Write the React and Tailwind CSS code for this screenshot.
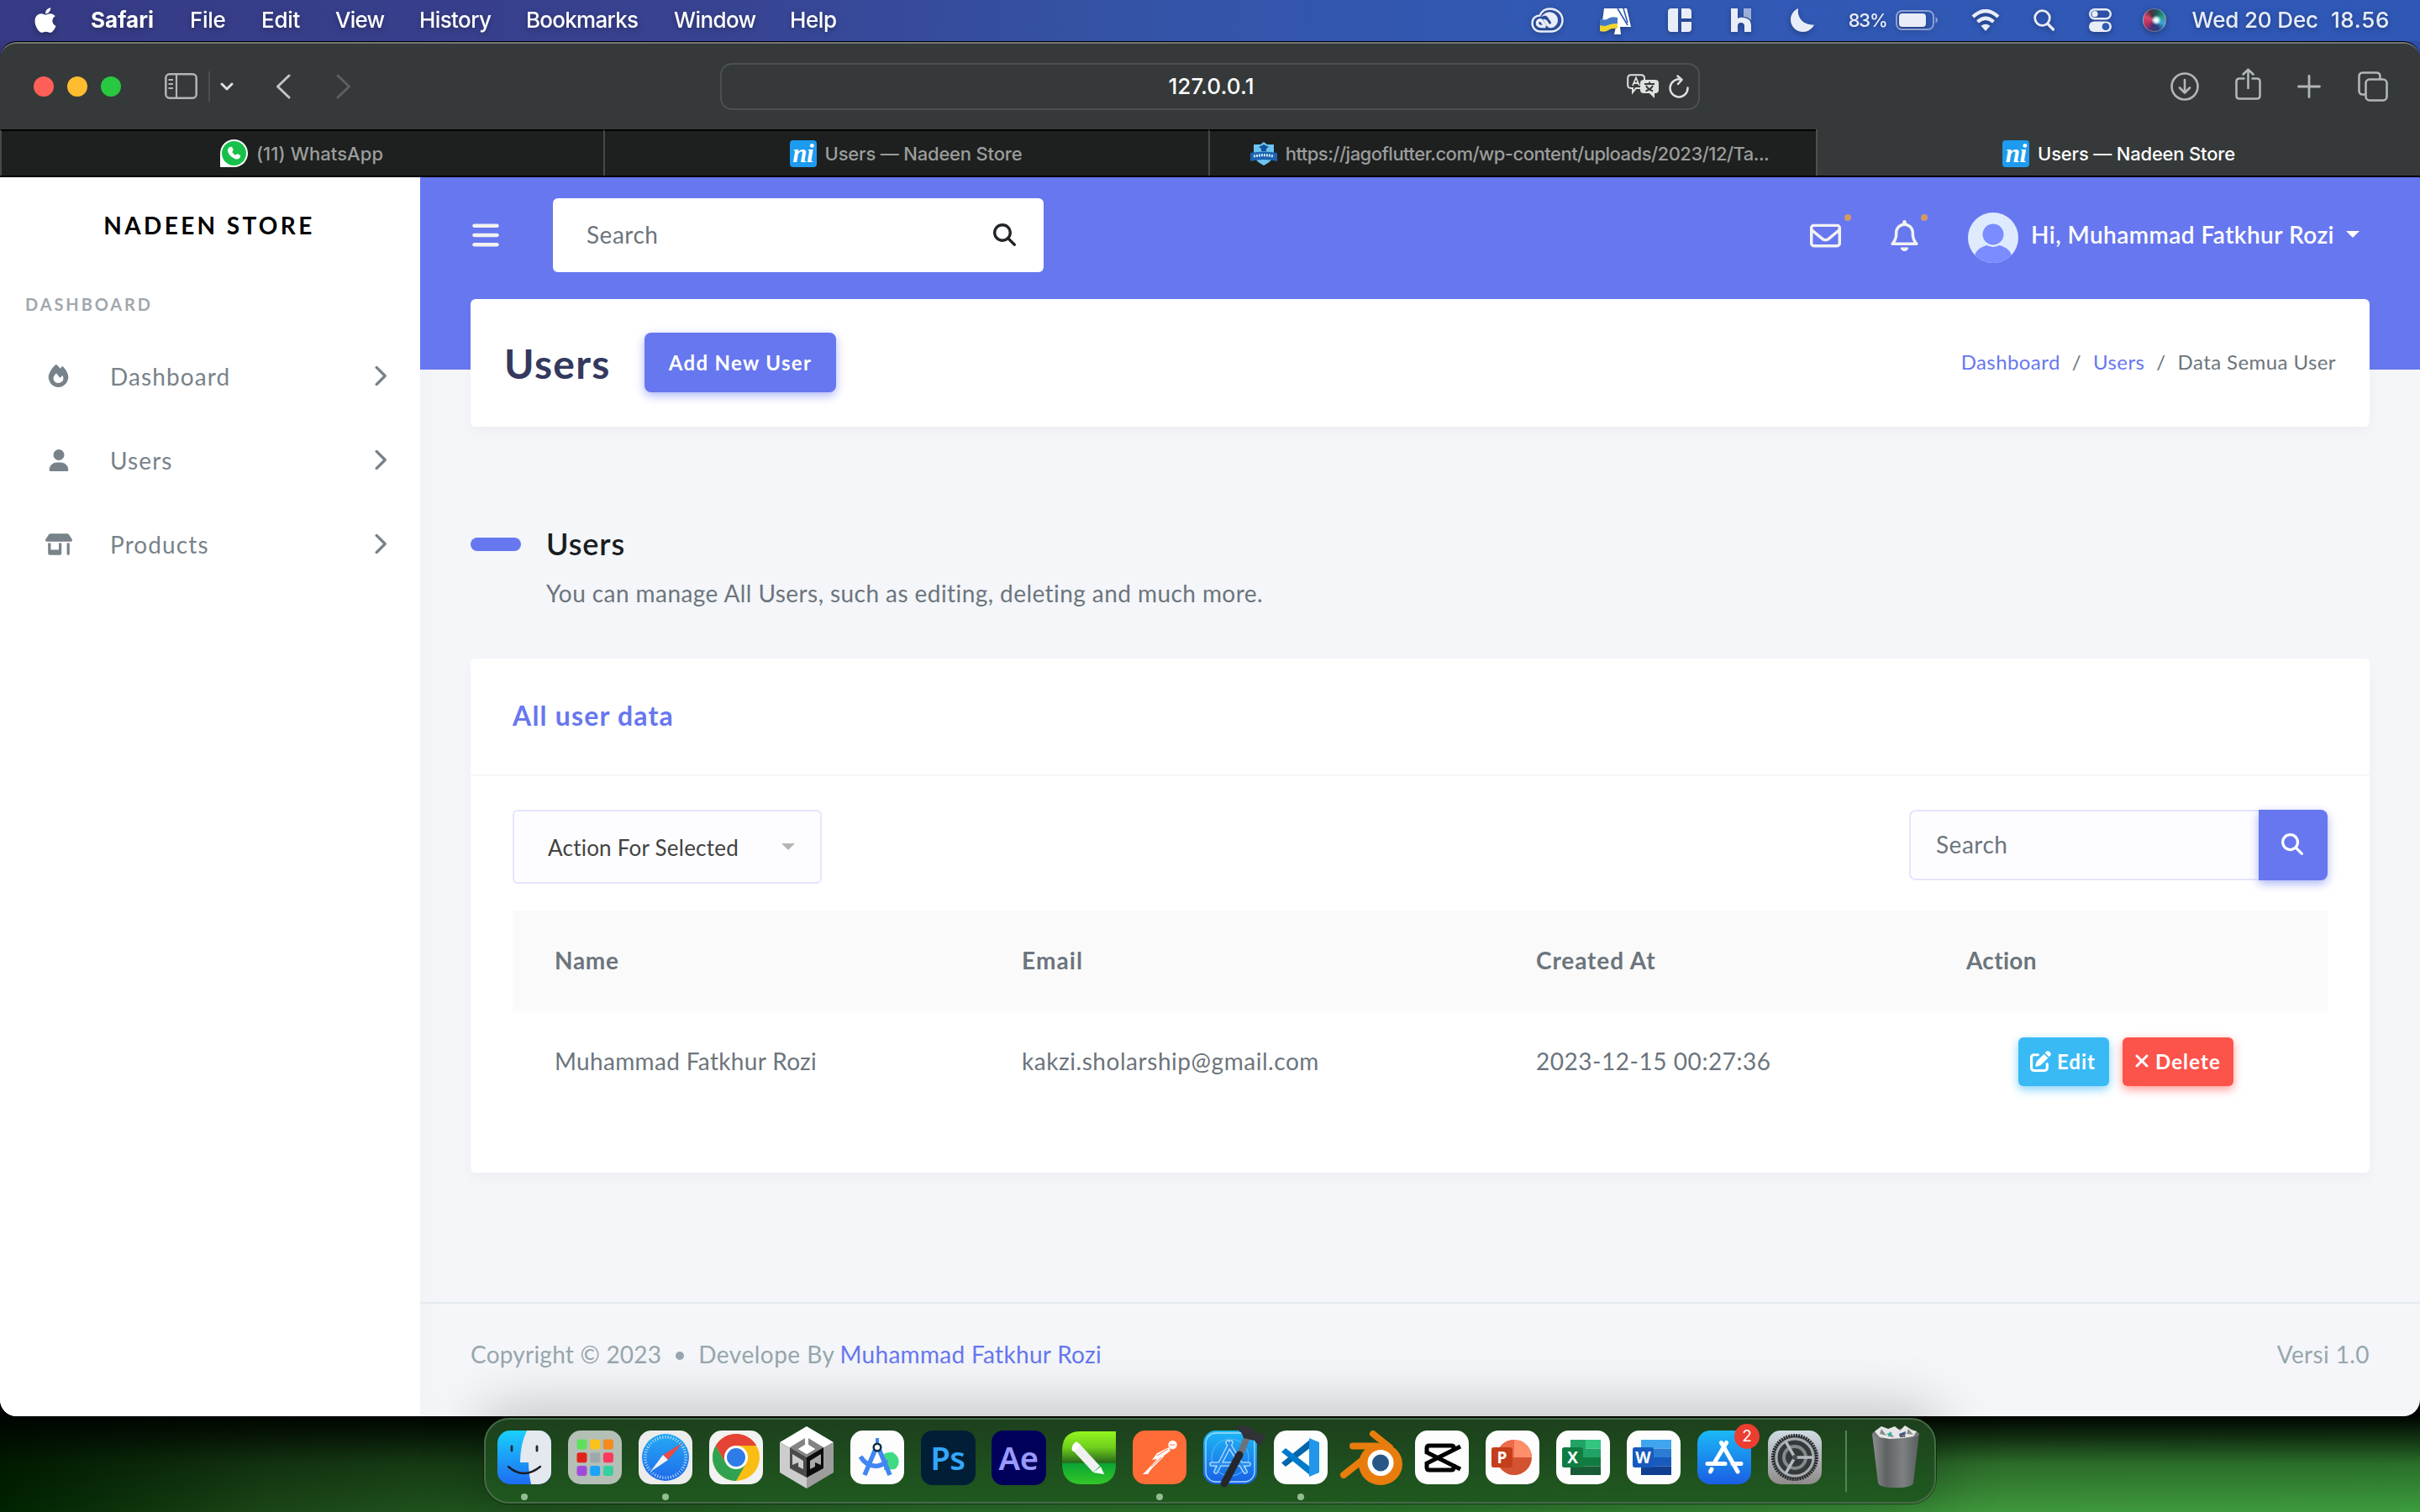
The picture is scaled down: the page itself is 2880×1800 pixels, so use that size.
import React from "react";
import { FaApple } from "react-icons/fa";
import {
  FaBars,
  FaChevronRight,
  FaFire,
  FaMagnifyingGlass,
  FaPenToSquare,
  FaRegBell,
  FaRegEnvelope,
  FaShop,
  FaUser,
  FaXmark,
} from "react-icons/fa6";

/* ---------- menu bar ---------- */

const MENUS = [
  { label: "Safari", cls: "w-[118px] font-bold tracking-[0.02px]" },
  { label: "File", cls: "w-[85px] font-medium tracking-[-0.3px]" },
  { label: "Edit", cls: "w-[88px] font-medium tracking-[-0.3px]" },
  { label: "View", cls: "w-[100px] font-medium tracking-[-0.8px]" },
  { label: "History", cls: "w-[127px] font-medium tracking-[-0.6px]" },
  { label: "Bookmarks", cls: "w-[176px] font-medium tracking-[-0.73px]" },
  { label: "Window", cls: "w-[138px] font-medium tracking-[-0.6px]" },
  { label: "Help", cls: "font-medium tracking-[-0.4px]" },
];

function MenuBar() {
  return (
    <div className="flex h-[49px] shrink-0 items-center bg-[linear-gradient(90deg,#363a84_0%,#384290_28%,#3454a8_48%,#3159b4_65%,#2f57b6_100%)] pb-[2px] font-['Inter',sans-serif] text-[26px] leading-[32px] text-white">
      <div className="flex w-full items-center drop-shadow-[0_2px_3px_rgba(0,0,0,0.3)]">
        <FaApple className="ml-[37px] mr-[37px] size-[34px] shrink-0" />
        {MENUS.map((m) => (
          <span key={m.label} className={`shrink-0 ${m.cls}`}>
            {m.label}
          </span>
        ))}
        <div className="ml-auto flex items-center pr-[36px] text-[#e9edf8]">
          <svg className="mr-[43px] h-[30px] w-[39px]" viewBox="0 0 39 30" fill="none" stroke="currentColor">
            <path d="M11.500 28.500C5.500 28.500 1.500 24 1.500 18.500C1.500 13 5.500 9.500 10.500 9.500C12.500 4.500 17 1.500 22.500 1.500C31 1.500 37.500 7.500 37.500 15C37.500 22.500 31.500 28.500 23.500 28.500Z" strokeWidth="2.400" />
            <path d="M17.500 22.500H12.500C8.500 22.500 7.500 20 7.500 18.500C7.500 16 9.500 14.500 12 15L17 22.500" strokeWidth="3.600" />
            <path d="M13 10.500C17 5 24 4.500 28.500 8C33 12 32.500 19 28 22.500C24 25 20.500 24 18.500 21L14.500 14.500C17 13.500 18.500 15 19.500 16.500L21 19C22.500 21 25 19.500 24 17L19.500 10.500C17.500 8.800 15 9 13 10.500Z" fill="currentColor" strokeWidth="0.800" />
          </svg>
          <svg className="mr-[44px] mt-[3px] h-[32px] w-[37px]" viewBox="0 0 37 32">
            <path d="M5 1H32L37 23H24L25 32H17L19 23H2Z" fill="#fff" />
            <path d="M21 1L33 21M28 1L33 18" stroke="#3058b5" strokeWidth="1.600" />
            <path d="M0 13Q6 16 10 13T21 12V20Q14 19 10 21T0 21Z" fill="#4677c4" />
            <path d="M0 21Q6 23 10 21T21 19V25Q14 24 10 27T0 28Z" fill="#f0d52c" />
          </svg>
          <svg className="mr-[47px] h-[28px] w-[28px]" viewBox="0 0 28 28" fill="currentColor">
            <path d="M4 0H12V28H4Q0 28 0 24V4Q0 0 4 0ZM16 0H24Q28 0 28 4V12H16ZM16 16H28V24Q28 28 24 28H16Z" />
          </svg>
          <svg className="mr-[47px] h-[28px] w-[24px]" viewBox="0 0 24 28" fill="currentColor">
            <path d="M0 0H8V12Q11 10 15 11Q24 12 24 20V28H16V20Q15 17 12 17Q8 17 8 21V28H0Z" />
            <path d="M15 0H24V14Q20 10 15 10Z" opacity="0.6" />
          </svg>
          <svg className="mr-[41px] h-[28px] w-[28px]" viewBox="0 0 28 28" fill="currentColor">
            <path d="M9 0C7.500 10 14 20 28 19.500C25 25 20.500 28 15 28C7 28 0 22 0 13.500C0 7.500 3.500 2.500 9 0Z" />
          </svg>
          <span className="mr-[10px] text-[22px] font-medium tracking-[-1.2px]">83%</span>
          <svg className="mr-[40px] h-[24px] w-[50px]" viewBox="0 0 50 24">
            <rect x="1" y="1" width="44" height="22" rx="6.500" fill="none" stroke="#e9edf8" strokeOpacity="0.5" strokeWidth="2" />
            <rect x="4" y="4" width="32" height="16" rx="4" fill="#e9edf8" />
            <path d="M47.500 8Q50 9.500 50 12T47.500 16Z" fill="#e9edf8" fillOpacity="0.5" />
          </svg>
          <svg className="mr-[40px] h-[26px] w-[34px]" viewBox="0 0 34 26" fill="none" stroke="currentColor" strokeWidth="4.200">
            <path d="M2 9Q17 -5 32 9" />
            <path d="M7.500 15Q17 6.500 26.500 15" />
            <path d="M17 26L11.500 19.800Q17 15.500 22.500 19.800Z" fill="currentColor" stroke="none" />
          </svg>
          <svg className="mr-[41px] h-[26px] w-[25px]" viewBox="0 0 25 26" fill="none" stroke="currentColor" strokeWidth="2.800" strokeLinecap="round">
            <circle cx="10.500" cy="10.500" r="8.800" />
            <path d="M17 17.500L23.500 24" strokeWidth="3.400" />
          </svg>
          <svg className="mr-[37px] h-[28px] w-[27px]" viewBox="0 0 27 28">
            <rect x="1.200" y="1.200" width="24.600" height="11" rx="5.500" fill="none" stroke="#e9edf8" strokeWidth="2.400" />
            <circle cx="7" cy="6.700" r="3.600" fill="#e9edf8" />
            <rect x="0" y="15.500" width="27" height="12.500" rx="6.200" fill="#e9edf8" />
            <circle cx="20" cy="21.700" r="4.400" fill="#3058b5" />
          </svg>
          <span className="mr-[31px] size-[28px] rounded-full border border-white/30 bg-[radial-gradient(circle_at_58%_50%,#ffffff_0%,#d8f4ff_12%,transparent_30%),conic-gradient(from_20deg,#1d5a5a,#2a9c86,#3fa6d6,#27407f,#4a2f7a,#b8305f,#d8486a,#4a3040,#1d5a5a)]" />
          <span className="mr-[15px] font-medium tracking-[-0.15px]">Wed 20 Dec</span>
          <span className="font-medium tracking-[0.7px]">18.56</span>
        </div>
      </div>
    </div>
  );
}

/* ---------- browser chrome ---------- */

function Toolbar() {
  return (
    <div className="grid h-[102px] grid-cols-[857px_1166px_857px] items-center pb-px">
      <div className="flex items-center pl-[40px] text-[#b3b6b6]">
        <span className="mr-[16px] size-[24px] rounded-full bg-[#ff5f57]" />
        <span className="mr-[16px] size-[24px] rounded-full bg-[#febc2e]" />
        <span className="mr-[52px] size-[24px] rounded-full bg-[#28c840]" />
        <svg className="mr-[13px] h-[31px] w-[39px]" viewBox="0 0 39 31" fill="none" stroke="currentColor" strokeWidth="2.500">
          <rect x="1.300" y="1.300" width="36.400" height="28.400" rx="4.500" />
          <path d="M14 1V30M4.500 8H10M4.500 13H10M4.500 18H10" strokeWidth="2.200" />
        </svg>
        <span className="mr-[12px] h-[36px] w-[2px] bg-[#4b4f50]" />
        <svg className="mr-[50px] h-[10px] w-[16px]" viewBox="0 0 16 10" fill="none" stroke="#dfe0e0" strokeWidth="3" strokeLinecap="round" strokeLinejoin="round">
          <path d="M2 2L8 8L14 2" />
        </svg>
        <svg className="mr-[54px] h-[30px] w-[18px]" viewBox="0 0 18 30" fill="none" stroke="#c3c5c5" strokeWidth="3" strokeLinecap="round" strokeLinejoin="round">
          <path d="M16 2L2.500 15L16 28" />
        </svg>
        <svg className="h-[30px] w-[18px]" viewBox="0 0 18 30" fill="none" stroke="#5c6061" strokeWidth="3" strokeLinecap="round" strokeLinejoin="round">
          <path d="M2 2L15.500 15L2 28" />
        </svg>
      </div>

      <div className="grid h-[56px] grid-cols-[1fr_auto_1fr] items-center rounded-[14px] border-2 border-[#4c5051]">
        <span />
        <span className="pl-[3px] font-['Inter',sans-serif] text-[26px] font-medium leading-[32px] tracking-[0.08px] text-white">127.0.0.1</span>
        <div className="flex items-center justify-end gap-[12px] pr-[11px] text-[#dfe0e0]">
          <svg className="h-[29px] w-[38px]" viewBox="0 0 38 29">
            <path d="M5 1.200H17Q21 1.200 21 5V15Q21 17 18 17H11L7 22V17H5Q1.200 17 1.200 13.500V5Q1.200 1.200 5 1.200Z" fill="none" stroke="currentColor" strokeWidth="2" />
            <path d="M7 14L11 4.500L15 14M8.500 11H13.500" fill="none" stroke="currentColor" strokeWidth="1.800" />
            <path d="M20 7H34Q38 7 38 11V19Q38 23 34 23H33V29L27 23H20Q16 23 16 19V11Q16 7 20 7Z" fill="currentColor" />
            <path d="M21 12H33M27 9.500V12M23 14Q25 18 31 20.500M31 14Q29 18 22.500 20.500" fill="none" stroke="#353939" strokeWidth="2" />
          </svg>
          <svg className="h-[28px] w-[24px]" viewBox="0 0 24 28" fill="none" stroke="currentColor" strokeWidth="2.500" strokeLinecap="round" strokeLinejoin="round">
            <path d="M22.500 15.500A10.500 10.500 0 1 1 14.500 5.700" />
            <path d="M10.500 1.500L15.500 6L11 11" />
          </svg>
        </div>
      </div>

      <div className="flex items-center justify-end pr-[38px] text-[#b3b6b6]">
        <svg className="mr-[43px] size-[34px]" viewBox="0 0 34 34" fill="none" stroke="currentColor" strokeWidth="2.600" strokeLinecap="round" strokeLinejoin="round">
          <circle cx="17" cy="17" r="15.500" />
          <path d="M17 9V24M11 18.500L17 24.500L23 18.500" />
        </svg>
        <svg className="mb-[5px] mr-[43px] h-[38px] w-[31px]" viewBox="0 0 31 38" fill="none" stroke="currentColor" strokeWidth="2.600" strokeLinecap="round" strokeLinejoin="round">
          <path d="M10.500 12.500H5Q1.500 12.500 1.500 16V33Q1.500 36.500 5 36.500H26Q29.500 36.500 29.500 33V16Q29.500 12.500 26 12.500H20.500" />
          <path d="M15.500 24V2M9.500 7.500L15.500 1.800L21.500 7.500" />
        </svg>
        <svg className="mr-[44px] size-[28px]" viewBox="0 0 28 28" stroke="currentColor" strokeWidth="2.800" strokeLinecap="round">
          <path d="M14 1.500V26.500M1.500 14H26.500" />
        </svg>
        <svg className="h-[36px] w-[36px]" viewBox="0 0 36 36" fill="none" stroke="currentColor" strokeWidth="2.600" strokeLinejoin="round">
          <rect x="9.500" y="9.500" width="25" height="25" rx="4.500" />
          <path d="M9.500 27.500H6Q1.500 27.500 1.500 23V6Q1.500 1.500 6 1.500H22Q26.500 1.500 26.500 6V9.500" />
        </svg>
      </div>
    </div>
  );
}

function NiIcon() {
  return (
    <span className="flex size-[32px] shrink-0 items-center justify-center rounded-[4px] bg-[#1d9bf0] font-['Liberation_Serif',serif] text-[31px] font-bold italic leading-[32px] tracking-[-0.5px] text-white">
      ni
    </span>
  );
}

function WhatsAppIcon() {
  return (
    <span className="flex size-[33px] shrink-0 items-center justify-center rounded-full rounded-bl-[6px] bg-white">
      <span className="flex size-[29px] items-center justify-center rounded-full bg-[#17c04a]">
        <svg className="size-[17px]" viewBox="0 0 17 17" fill="#fff">
          <path d="M3.500 1L6 0.800L7.800 4.800L6.200 6.800Q7.500 9.500 10.300 10.800L12.200 9L16.200 11Q16.500 13.500 14.500 14.800Q12.500 16.300 9.500 15Q3.500 12.500 1.300 7Q0 3 3.500 1Z" />
        </svg>
      </span>
    </span>
  );
}

function ShieldIcon() {
  return (
    <svg className="h-[28px] w-[32px] shrink-0" viewBox="0 0 32 28">
      <path d="M16 0L20 3H28V16Q26 23 16 28Q6 23 4 16V3H12Z" fill="#6cc5ef" />
      <path d="M16 3L22 6L19 8V11H13V8L10 6Z" fill="#17519b" />
      <path d="M0 13Q16 10 32 13V23Q16 19 0 23Z" fill="#1b62ae" />
      <path d="M4 17Q16 14.500 28 17" stroke="#cfe9fa" strokeWidth="3" strokeDasharray="2 1" fill="none" />
    </svg>
  );
}

const TABS = [
  { icon: <WhatsAppIcon />, label: "(11) WhatsApp", gap: "gap-[10px] pr-[2px]", text: "tracking-[0.08px]" },
  { icon: <NiIcon />, label: "Users — Nadeen Store", gap: "gap-[10px] pr-[2px]", text: "tracking-[-0.19px]" },
  { icon: <ShieldIcon />, label: "https://jagoflutter.com/wp-content/uploads/2023/12/Ta...", gap: "gap-[10px] pr-[8px]", text: "tracking-[-0.51px]" },
  { icon: <NiIcon />, label: "Users — Nadeen Store", gap: "gap-[10px]", text: "tracking-[-0.19px]", active: true },
];

function TabBar() {
  return (
    <div className="grid h-[57px] grid-cols-[718px_720px_723px_719px] border-b-2 border-black font-['Inter',sans-serif] text-[22px] font-medium leading-[32px]">
      {TABS.map((t, i) => (
        <div
          key={i}
          className={`flex items-center justify-center border-l-2 ${t.gap} ${
            t.active ? "border-[#4b4f50] pt-[2px] text-white" : "border-t-2 border-l-[#454948] border-t-black bg-[#1e201f] text-[#9b9d9c]"
          }`}
        >
          {t.icon}
          <span className={`whitespace-nowrap ${t.text}`}>{t.label}</span>
        </div>
      ))}
    </div>
  );
}

/* ---------- page ---------- */

const NAV = [
  { icon: <FaFire className="size-[27px]" />, label: "Dashboard" },
  { icon: <FaUser className="size-[26px]" />, label: "Users" },
  { icon: <FaShop className="size-[32px]" />, label: "Products" },
];

function Sidebar() {
  return (
    <aside className="w-[500px] shrink-0 bg-white shadow-[0_0_40px_rgba(0,0,0,0.03)]">
      <div className="flex h-[114px] items-center justify-center pr-[2px] text-[28px] font-bold tracking-[3.35px] text-black">NADEEN STORE</div>
      <div className="flex h-[74px] items-center pl-[30px] text-[20px] font-bold tracking-[2.9px] text-[#a0a8ae]">DASHBOARD</div>
      {NAV.map((n) => (
        <div key={n.label} className="flex h-[100px] items-center pr-[35px] text-[#78828a]">
          <span className="flex w-[139px] justify-center pb-[3px]">{n.icon}</span>
          <span className="-ml-[8px] -mt-[2px] text-[28px] tracking-[1.1px]">{n.label}</span>
          <FaChevronRight className="ml-auto mb-[4px] size-[27px]" />
        </div>
      ))}
    </aside>
  );
}

function TopNav() {
  return (
    <header className="mb-[7px] flex h-[138px] items-center pr-[72px] pl-[60px] text-[#f2f2f2]">
      <FaBars className="mr-[62px] size-[36px]" />
      <div className="flex h-[88px] w-[584px] items-center justify-between rounded-[6px] bg-white pl-[40px] pr-[33px]">
        <span className="-mt-[2px] text-[28px] tracking-[0.5px] text-[#6c757d]">Search</span>
        <FaMagnifyingGlass className="mb-[2px] size-[27px] text-[#212529]" />
      </div>
      <div className="ml-auto flex items-center">
        <span className="relative mr-[57px]">
          <FaRegEnvelope className="size-[37px]" />
          <span className="absolute -right-[12px] -top-[7px] size-[8px] rounded-full bg-[#d39a63]" />
        </span>
        <span className="relative mr-[57px]">
          <FaRegBell className="size-[37px]" />
          <span className="absolute -right-[9px] -top-[7px] size-[8px] rounded-full bg-[#d39a63]" />
        </span>
        <svg className="mr-[15px] mt-[6px] size-[60px]" viewBox="0 0 60 60">
          <defs>
            <clipPath id="avatar">
              <circle cx="30" cy="30" r="30" />
            </clipPath>
          </defs>
          <g clipPath="url(#avatar)">
            <rect width="60" height="60" fill="#deebff" />
            <ellipse cx="30" cy="53" rx="22" ry="15" fill="#7a8cff" />
            <circle cx="30" cy="26" r="15" fill="#deebff" />
            <circle cx="30" cy="26" r="12.500" fill="#7a8cff" />
          </g>
        </svg>
        <span className="-mt-[2px] text-[28px] font-semibold tracking-[0.46px] text-white">Hi, Muhammad Fatkhur Rozi</span>
        <span className="mb-[3px] ml-[14px] border-x-[8px] border-t-[8px] border-x-transparent border-t-white" />
      </div>
    </header>
  );
}

function TitleCard() {
  return (
    <section className="flex h-[152px] items-center rounded-[6px] bg-white px-[40px] shadow-[0_8px_16px_rgba(0,0,0,0.03)]">
      <h1 className="w-[167px] pt-[2px] text-[48px] font-bold tracking-[1.3px] text-[#34395e]">Users</h1>
      <button className="mb-px flex h-[71px] w-[228px] items-center justify-center rounded-[8px] bg-[#6777ef] text-[24px] font-bold tracking-[1.35px] text-white shadow-[0_4px_12px_#acb5f6]">
        Add New User
      </button>
      <nav className="-mt-[2px] ml-auto flex gap-[14px] text-[24px] tracking-[0.42px] text-[#6c757d]">
        <span className="text-[#6777ef]">Dashboard</span>
        <span>/</span>
        <span className="text-[#6777ef]">Users</span>
        <span>/</span>
        <span>Data Semua User</span>
      </nav>
    </section>
  );
}

const COLUMNS = "grid h-[120px] grid-cols-[557px_611px_512px_480px] items-center text-[28px] text-[#6c757d]";

function DataCard() {
  return (
    <section className="mt-[50px] h-[612px] rounded-[6px] bg-white shadow-[0_8px_16px_rgba(0,0,0,0.03)]">
      <div className="flex h-[140px] items-center border-b-2 border-[#f7f7f7] px-[50px] pb-[2px] text-[32px] font-bold tracking-[1.2px] text-[#6777ef]">All user data</div>
      <div className="px-[50px] pt-[40px]">
        <div className="flex h-[88px] items-start justify-between">
          <div className="flex h-[88px] w-[368px] items-center justify-between rounded-[6px] border-2 border-[#e4e6fc] bg-[#fdfdff] pl-[40px] pr-[30px]">
            <span className="pt-px text-[26px] tracking-[0.23px] text-[#424242]">Action For Selected</span>
            <span className="border-x-[8px] border-t-[8px] border-x-transparent border-t-[#b5b5b5]" />
          </div>
          <div className="flex h-[84px] w-[498px]">
            <div className="flex flex-1 items-center rounded-l-[8px] border-2 border-r-0 border-[#e4e6fc] bg-[#fdfdff] pb-[2px] pl-[30px] text-[28px] tracking-[0.5px] text-[#6c757d]">
              Search
            </div>
            <button className="flex w-[82px] items-center justify-center rounded-r-[8px] bg-[#6777ef] pr-[3px] pb-[3px] text-white shadow-[0_4px_12px_#acb5f6]">
              <FaMagnifyingGlass className="size-[26px]" />
            </button>
          </div>
        </div>
        <div className="mt-[32px]">
          <div className={`${COLUMNS} bg-[#fafafa] pb-[2px] font-bold tracking-[0.7px]`}>
            <span className="pl-[50px]">Name</span>
            <span className="pl-[49px] tracking-[1.1px]">Email</span>
            <span className="pl-[50px] tracking-[0.9px]">Created At</span>
            <span className="pl-[50px] tracking-[0.3px]">Action</span>
          </div>
          <div className={COLUMNS}>
            <span className="pb-[2px] pl-[50px] tracking-[0.33px]">Muhammad Fatkhur Rozi</span>
            <span className="pb-[2px] pl-[49px] tracking-[0.55px]">kakzi.sholarship@gmail.com</span>
            <span className="pb-[2px] pl-[50px] tracking-[0.54px]">2023-12-15 00:27:36</span>
            <span className="flex gap-[16px] pl-[112px] text-[24px] font-bold text-white">
              <button className="flex h-[58px] w-[108px] items-center gap-[7px] rounded-[6px] bg-[#3abaf4] pl-[14px] tracking-[1px] shadow-[0_4px_12px_#82d3f8]">
                <FaPenToSquare className="mb-[2px] size-[25px]" />
                Edit
              </button>
              <button className="flex h-[58px] w-[132px] items-center gap-[4px] rounded-[6px] bg-[#fc544b] pl-[11px] tracking-[1.1px] shadow-[0_4px_12px_#fd9b96]">
                <FaXmark className="mb-[2px] size-[24px]" />
                Delete
              </button>
            </span>
          </div>
        </div>
      </div>
    </section>
  );
}

function Page() {
  return (
    <div className="flex h-[1475px] shrink-0 overflow-hidden bg-[#f4f6f9] font-['Lato',sans-serif] leading-[40px]">
      <Sidebar />
      <main className="min-w-0 flex-1 bg-[linear-gradient(#6777ef_229px,transparent_229px)]">
        <TopNav />
        <div className="px-[60px]">
          <TitleCard />
          <div className="mt-[110px] flex h-[60px] items-center">
            <span className="mr-[30px] h-[16px] w-[60px] rounded-full bg-[#6777ef]" />
            <h2 className="-mt-[2px] text-[36px] font-semibold tracking-[0.9px] text-[#191d21]">Users</h2>
          </div>
          <p className="flex h-[56px] items-center pl-[90px] text-[28px] tracking-[0.43px] text-[#6c757d]">
            You can manage All Users, such as editing, deleting and much more.
          </p>
          <DataCard />
        </div>
        <footer className="mt-[154px] flex h-[122px] items-center border-t-2 border-[#e3eaef] px-[60px] text-[28px] tracking-[0.23px] text-[#98a6ad]">
          <span>Copyright © 2023</span>
          <span className="mx-[17px] mt-[3px] size-[10px] rounded-full bg-[#98a6ad]" />
          <span className="mr-[6px] tracking-[0.5px]">Develope By</span>
          <span className="tracking-[0.3px] text-[#6777ef]">Muhammad Fatkhur Rozi</span>
          <span className="ml-auto tracking-[0.39px]">Versi 1.0</span>
        </footer>
      </main>
    </div>
  );
}

/* ---------- dock ---------- */

const White = () => <rect width="64" height="64" rx="15" fill="#fdfdfd" />;

function Letters({ bg, fg, text }) {
  return (
    <div className={`flex size-[65px] items-center justify-center rounded-[14px] pb-[2px] font-['Noto_Sans',sans-serif] text-[38px] font-semibold leading-[52px] tracking-[-0.5px] ${bg} ${fg}`}>
      {text}
    </div>
  );
}

function Office({ letter, tile, children }) {
  return (
    <svg viewBox="0 0 64 64">
      <White />
      {children}
      <rect x="7" y="20" width="25" height="24" rx="2.500" fill={tile} />
      <text x="19.500" y="39" textAnchor="middle" fontFamily="Open Sans, sans-serif" fontWeight="700" fontSize="19" fill="#fff">
        {letter}
      </text>
    </svg>
  );
}

const PAD = [
  "#5fe05a", "#fbc21a", "#f58a1e",
  "#e0241c", "#a0a8ac", "#fb3a5e",
  "#a04bd8", "#1ba4f8", "#35cfa0",
];

const ticks = Array.from({ length: 48 }, (_, i) => i * 7.5);
const spokes = [0, 120, 240];

const DOCK = [
  {
    dot: true,
    art: (
      <svg viewBox="0 0 64 64">
        <defs>
          <linearGradient id="finderBlue" x2="0" y2="1">
            <stop stopColor="#1ad0fd" />
            <stop offset="1" stopColor="#1d6cf2" />
          </linearGradient>
          <clipPath id="finderClip">
            <rect width="64" height="64" rx="15" />
          </clipPath>
        </defs>
        <g clipPath="url(#finderClip)">
          <rect width="64" height="64" fill="url(#finderBlue)" />
          <path d="M35 0H64V64H40Q37 50 37 38H27Q27 17 35 0Z" fill="#e4e8ef" />
        </g>
        <path d="M17 19V24M47 19V24" stroke="#1c2b3c" strokeWidth="2.800" strokeLinecap="round" />
        <path d="M13 43Q31 59 51 43" stroke="#1c1c24" strokeWidth="2.400" fill="none" strokeLinecap="round" />
      </svg>
    ),
  },
  {
    art: (
      <svg viewBox="0 0 64 64">
        <rect width="64" height="64" rx="15" fill="#b4bfb6" />
        {PAD.map((c, i) => (
          <rect key={i} x={10.5 + (i % 3) * 15.7} y={10.5 + Math.floor(i / 3) * 15.7} width="12" height="12" rx="2.800" fill={c} />
        ))}
      </svg>
    ),
  },
  {
    dot: true,
    art: (
      <svg viewBox="0 0 64 64">
        <defs>
          <linearGradient id="safariBlue" x2="0" y2="1">
            <stop stopColor="#24aaf4" />
            <stop offset="1" stopColor="#1f6bea" />
          </linearGradient>
        </defs>
        <rect width="64" height="64" rx="15" fill="#ececec" />
        <circle cx="32" cy="32" r="28" fill="url(#safariBlue)" />
        {ticks.map((a) => (
          <path key={a} d="M32 6V9.500" stroke="#d3ebfb" strokeWidth="0.900" transform={`rotate(${a} 32 32)`} />
        ))}
        <path d="M52 15L35 35L29 29Z" fill="#ee4a43" />
        <path d="M14 49L29 29L35 35Z" fill="#f2f2f2" />
      </svg>
    ),
  },
  {
    art: (
      <svg viewBox="0 0 64 64">
        <rect width="64" height="64" rx="15" fill="#f2f2f2" />
        <circle cx="32" cy="32" r="28" fill="#fbbd14" />
        <path d="M32 32L44 39L32 60A28 28 0 0 1 7.750 18L20 39Z" fill="#31a350" />
        <path d="M7.750 18A28 28 0 0 1 56.250 18H32L20 39Z" fill="#e54335" />
        <circle cx="32" cy="32" r="14" fill="#fff" />
        <circle cx="32" cy="32" r="11" fill="#2f7bea" />
      </svg>
    ),
  },
  {
    art: (
      <svg viewBox="0 0 64 64" className="overflow-visible">
        <path d="M32 -5L64 14L32 32L0 14Z" fill="#fff" />
        <path d="M0 14L32 32V69L0 50Z" fill="#cdcdcd" />
        <path d="M64 14L32 32V69L64 50Z" fill="#9d9d9d" />
        <path d="M12 20L30 9V17L22 22L32 28L42 22L34 17V9L52 20L32 32Z" fill="#848484" />
        <path d="M30 9V17L22 22L32 28L42 22L34 17V9Z" fill="#fff" />
        <path d="M12 20L32 32V56L12 45Z" fill="#4a4a4a" />
        <path d="M52 20L32 32V56L52 45Z" fill="#0c0c0c" />
        <path d="M15 28L28 36V46L22 43V38L15 41Z" fill="#cdcdcd" />
        <path d="M49 28L36 36V46L42 43V38L49 41Z" fill="#a8a8a8" />
      </svg>
    ),
  },
  {
    art: (
      <svg viewBox="0 0 64 64">
        <White />
        <path d="M40 28A10 10 0 0 1 53 46L40 47Z" fill="#3ddc84" />
        <path d="M47 29L51 26M53 38H57" stroke="#3ddc84" strokeWidth="1.600" />
        <path d="M32 17L17 53M32 17L47 53" stroke="#4285f4" strokeWidth="5.500" />
        <path d="M12 31Q20 44 33 42Q40 41 43 35" stroke="#4285f4" strokeWidth="5.500" fill="none" />
        <path d="M32 9V17" stroke="#4285f4" strokeWidth="4" />
        <circle cx="32" cy="20" r="4.300" fill="#fff" stroke="#0d3142" strokeWidth="2.500" />
      </svg>
    ),
  },
  { art: <Letters bg="bg-[#001e36]" fg="text-[#31a8ff]" text="Ps" /> },
  { art: <Letters bg="bg-[#00005b]" fg="text-[#9999ff]" text="Ae" /> },
  {
    art: (
      <svg viewBox="0 0 64 64">
        <defs>
          <linearGradient id="corel" x2="0" y2="1">
            <stop stopColor="#93f51e" />
            <stop offset="0.300" stopColor="#6fd01c" />
            <stop offset="0.590" stopColor="#2a6a1c" />
            <stop offset="0.610" stopColor="#0aa534" />
            <stop offset="1" stopColor="#34c828" />
          </linearGradient>
        </defs>
        <path d="M22 1H64V40Q64 64 40 64H24Q0 64 0 40V24Q0 1 22 1Z" fill="url(#corel)" />
        <path d="M17 20L41 46" stroke="#f0f0f0" strokeWidth="11" />
        <path d="M12 24Q10 18 17 13L22 17L14 25ZM37 50L46 43L50 52Z" fill="#fff" />
      </svg>
    ),
  },
  {
    dot: true,
    art: (
      <svg viewBox="0 0 64 64">
        <rect width="64" height="64" rx="15" fill="#ff6c37" />
        <circle cx="47.500" cy="17" r="5.200" fill="#fff" />
        <path d="M43 20L29 27L23 35L33 33L45 24Z" fill="#fff" />
        <path d="M30 33L18 46L12 52H18L22 46L38 30Z" fill="#fff" />
        <path d="M29 30L42 22M22 43L34 32M44 17H50" stroke="#ff6c37" strokeWidth="1" />
      </svg>
    ),
  },
  {
    art: (
      <svg viewBox="0 0 64 64" className="overflow-visible">
        <defs>
          <linearGradient id="xcode" x2="0" y2="1">
            <stop stopColor="#1bb8f6" />
            <stop offset="1" stopColor="#1a5fe6" />
          </linearGradient>
        </defs>
        <rect width="64" height="64" rx="15" fill="url(#xcode)" />
        <rect x="3" y="3" width="58" height="58" rx="12" fill="none" stroke="#a9dcfb" strokeWidth="1.300" />
        <circle cx="32" cy="32" r="22" fill="none" stroke="#5ebcf7" strokeWidth="1" />
        <path d="M33 14L15 49M29 14L50 49M10 40H54" stroke="#b9e0fc" strokeWidth="5.500" strokeLinecap="round" />
        <path d="M33 14L15 49M29 14L50 49M10 40H54" stroke="#268df0" strokeWidth="3" strokeLinecap="round" />
        <path d="M54 4L43 30" stroke="#6d7178" strokeWidth="7.500" />
        <path d="M43 29L25 63" stroke="#25272c" strokeWidth="9" strokeLinecap="round" />
        <path d="M36 -3Q46 -9 58 -3L63 3L66 4L69 2L73 7L69 18L63 15L61 12L48 9Q46 0 36 -3Z" fill="#303238" />
      </svg>
    ),
  },
  {
    dot: true,
    art: (
      <svg viewBox="0 0 64 64">
        <White />
        <path d="M9 38.500L14 43L44 20V10Z" fill="#0065a9" />
        <path d="M9 25.500L14 21L44 44V54Z" fill="#007acc" />
        <path d="M42 9L54 14V50L42 55Z" fill="#2196ea" />
      </svg>
    ),
  },
  {
    art: (
      <svg viewBox="0 0 76 72" className="!h-[72px] !w-[76px] -mx-[6px] overflow-visible">
        <g stroke="#e87d0d" strokeWidth="8" strokeLinecap="round">
          <path d="M5 53L44 22M16 18.500H44M40 4L60 20" />
        </g>
        <ellipse cx="49" cy="40" rx="26" ry="25" fill="#e87d0d" />
        <path d="M42 16L30 26L44 30L58 20Z" fill="#e87d0d" />
        <circle cx="49" cy="38.500" r="15.500" fill="#fff" />
        <circle cx="49" cy="38.500" r="10" fill="#265787" />
      </svg>
    ),
  },
  {
    art: (
      <svg viewBox="0 0 64 64">
        <White />
        <path d="M46 24V20Q46 18 43 18H17Q14 18 14 21V26L54 46M46 40V44Q46 47 43 47H17Q14 47 14 44V39L54 19" fill="none" stroke="#000" strokeWidth="5" />
      </svg>
    ),
  },
  {
    art: (
      <Office letter="P" tile="#c43e1c">
        <circle cx="34" cy="32" r="21" fill="#d35230" />
        <path d="M34 11A21 21 0 0 0 13 32H34Z" fill="#ed6c47" />
        <path d="M34 11A21 21 0 0 1 55 32H34Z" fill="#ff8f6b" />
      </Office>
    ),
  },
  {
    art: (
      <Office letter="X" tile="#107c41">
        <path d="M17 11H35V32H17Z" fill="#21a366" />
        <path d="M35 11H53V21.500H35Z" fill="#33c481" />
        <path d="M35 21.500H53V32H35Z" fill="#21a366" />
        <path d="M17 32H53V42.500H17Z" fill="#107c41" />
        <path d="M17 42.500H53V53H17Z" fill="#185c37" />
      </Office>
    ),
  },
  {
    art: (
      <Office letter="W" tile="#185abd">
        <path d="M17 11H53V21.500H17Z" fill="#41a5ee" />
        <path d="M17 21.500H53V32H17Z" fill="#2b7cd3" />
        <path d="M17 32H53V42.500H17Z" fill="#185abd" />
        <path d="M17 42.500H53V53H17Z" fill="#103f91" />
      </Office>
    ),
  },
  {
    badge: "2",
    art: (
      <svg viewBox="0 0 64 64">
        <defs>
          <linearGradient id="store" x2="0" y2="1">
            <stop stopColor="#1bb9f7" />
            <stop offset="1" stopColor="#1a5ee4" />
          </linearGradient>
        </defs>
        <rect width="64" height="64" rx="15" fill="url(#store)" />
        <path d="M34.500 14.500L20.500 38M28.500 14.500L48 49M12 39.500H33M42 39.500H52M17 46L15.500 49" stroke="#fff" strokeWidth="5" strokeLinecap="round" />
      </svg>
    ),
  },
  {
    art: (
      <svg viewBox="0 0 64 64">
        <defs>
          <linearGradient id="gear" x2="0" y2="1">
            <stop stopColor="#cfdbe2" />
            <stop offset="1" stopColor="#8f8c8b" />
          </linearGradient>
        </defs>
        <rect width="64" height="64" rx="15" fill="url(#gear)" />
        <circle cx="32" cy="32" r="26" fill="#5f6365" stroke="#25282a" strokeWidth="4" strokeDasharray="2 1" />
        <circle cx="32" cy="32" r="22" fill="#36393b" stroke="#a7adb0" strokeWidth="3" />
        <circle cx="32" cy="32" r="13" fill="none" stroke="#85898b" strokeWidth="4" />
        {spokes.map((a) => (
          <path key={a} d="M32 32H54" stroke="#b4babd" strokeWidth="3.500" transform={`rotate(${a} 32 32)`} />
        ))}
        <circle cx="32" cy="32" r="3" fill="#4a4d4f" />
      </svg>
    ),
  },
];

function Trash() {
  return (
    <svg className="-mt-[7px] h-[76px] w-[58px]" viewBox="0 0 58 76">
      <defs>
        <linearGradient id="bin">
          <stop stopColor="#8d9091" />
          <stop offset="0.300" stopColor="#5f6263" />
          <stop offset="0.650" stopColor="#7e8182" />
          <stop offset="1" stopColor="#5a5d5e" />
        </linearGradient>
      </defs>
      <path d="M1 11L57 11L50 69Q49 75 29 75T8 69Z" fill="url(#bin)" />
      <ellipse cx="29" cy="11" rx="28" ry="6" fill="#77797a" />
      <path d="M4 8L12 2L20 5L28 2L34 7L40 1L48 6L54 8L50 14L38 16L22 17L10 15Z" fill="#e6e7e6" />
      <path d="M12 5L18 13L10 11ZM22 8L27 15L20 14ZM44 5L50 12L42 11Z" fill="#8a8d8c" />
      <path d="M18 11L25 9L22 14Z" fill="#25b7a8" />
      <path d="M33 11L41 8L40 15L34 15Z" fill="#3f5a86" />
      <path d="M36 13L40 12L39 15Z" fill="#d96c2a" />
    </svg>
  );
}

function Dock() {
  return (
    <div className="relative z-10 flex h-[102px] w-[1728px] rounded-[30px] border-2 border-[#466b47] bg-[linear-gradient(180deg,rgba(30,66,30,0.96),rgba(31,88,31,0.96))] pl-[14px] pt-[13px] shadow-[0_0_70px_8px_rgba(0,0,0,0.24),0_0_0_1px_rgba(0,20,0,0.5)]">
      <div className="flex gap-[20px]">
        {DOCK.map((d, i) => (
          <div key={i} className="relative flex w-[64px] flex-col items-center [&>svg]:h-[64px] [&>svg]:w-[64px] [&>svg]:shrink-0">
            {d.art}
            {d.dot && <span className="absolute top-[75px] size-[8px] rounded-full bg-[#94bd93]" />}
            {d.badge && (
              <span className="absolute -right-[10px] -top-[8px] flex size-[30px] items-center justify-center rounded-full bg-[#ec3d31] font-['Inter',sans-serif] text-[19px] leading-[24px] text-white">
                {d.badge}
              </span>
            )}
          </div>
        ))}
      </div>
      <span className="ml-[28px] mr-[29px] h-[73px] w-[2px] bg-[#4f8550]" />
      <Trash />
    </div>
  );
}

export default function App() {
  return (
    <div className="flex h-[1800px] w-[2880px] flex-col overflow-hidden bg-[linear-gradient(90deg,#35377d,#2f4ba8)]">
      <MenuBar />
      <div className="flex h-[1637px] shrink-0 flex-col bg-[linear-gradient(180deg,transparent_50%,#010501_50%)]">
        <div className="flex h-full flex-col overflow-hidden rounded-[20px] border-t border-black bg-[#353939]">
          <div className="flex h-[161px] shrink-0 flex-col rounded-t-[20px] border-t-2 border-[#747776]">
            <Toolbar />
            <TabBar />
          </div>
          <Page />
        </div>
      </div>
      <div className="flex h-[114px] shrink-0 justify-center bg-[linear-gradient(180deg,#000500_0%,rgba(0,5,0,0.75)_20%,rgba(0,5,0,0.3)_50%,transparent_100%),linear-gradient(90deg,#002300_0%,#1a4517_11%,#20561e_20%,#2b702b_40%,#2f7d2f_60%,#3f983c_83%,#3c9c3c_100%)] pt-[2px]">
        <Dock />
      </div>
    </div>
  );
}
